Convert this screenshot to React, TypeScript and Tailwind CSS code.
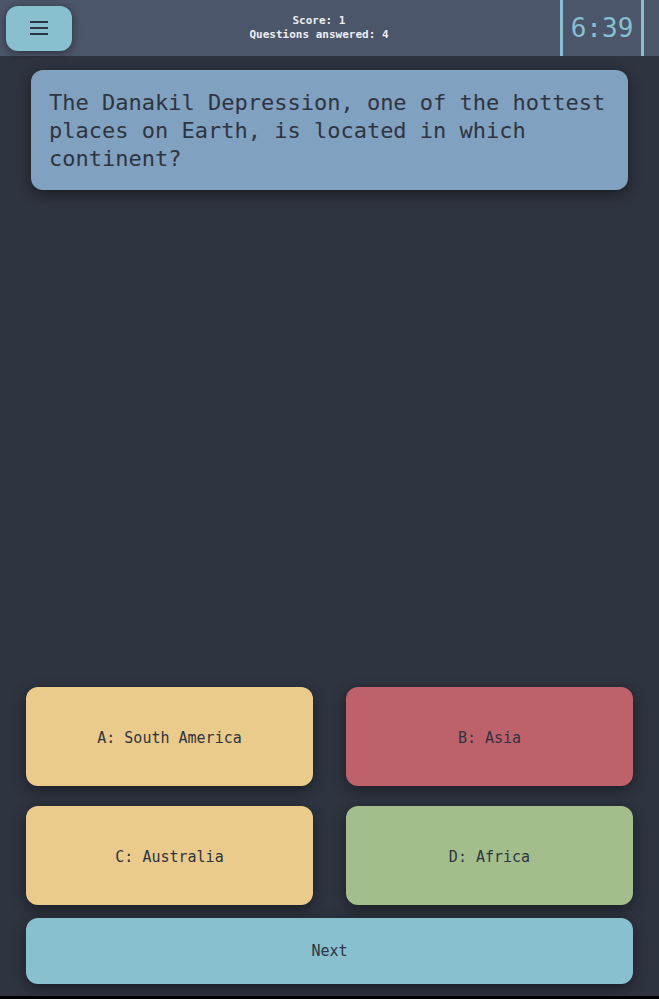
import React from 'react';

const answers = [
  { label: 'A: South America', color: 'bg-[#ebcb8b]' },
  { label: 'B: Asia', color: 'bg-[#bf616a]' },
  { label: 'C: Australia', color: 'bg-[#ebcb8b]' },
  { label: 'D: Africa', color: 'bg-[#a3be8c]' },
];

export default function App() {
  return (
    <div className="min-h-screen bg-black font-['DejaVu_Sans_Mono',monospace]">
      <div className="flex flex-col h-[996px] bg-[#2e3440]">
        {/* Top bar */}
        <header className="h-14 bg-[#4c566a] flex items-stretch shrink-0">
          <div className="flex items-center pl-[6px]">
            <button className="w-[66px] h-[45px] rounded-xl bg-[#88c0d0] shadow-[0_2px_8px_rgba(0,0,0,0.45)] flex items-center justify-center">
              <svg width="18" height="14" viewBox="0 0 18 14">
                <rect x="0" y="0" width="18" height="2" fill="#2e3440" />
                <rect x="0" y="6" width="18" height="2" fill="#2e3440" />
                <rect x="0" y="12" width="18" height="2" fill="#2e3440" />
              </svg>
            </button>
          </div>
          <div className="flex-1 flex flex-col items-center justify-center text-[11px] leading-[14px] font-bold text-[#eceff4] pl-[6px]">
            <span>Score: 1</span>
            <span>Questions answered: 4</span>
          </div>
          <div className="w-[84px] border-x-[3px] border-[#88c0d0] flex items-center justify-center text-[26px] text-[#88c0d0] mr-[15px]">
            6:39
          </div>
        </header>

        {/* Question */}
        <main className="flex-1 flex flex-col px-[26px] pb-3">
          <div className="mx-[5px] mt-[14px] rounded-xl bg-[#81a1c1] px-[18px] pt-[19px] pb-[17px] text-[22px] leading-[28px] text-[#2e3440] shadow-[0_4px_14px_rgba(0,0,0,0.45)]">
            The Danakil Depression, one of the hottest places on Earth, is located in which continent?
          </div>

          <div className="flex-1" />

          <div className="grid grid-cols-2 gap-x-[33px] gap-y-[20px]">
            {answers.map((a) => (
              <button
                key={a.label}
                className={`h-[99px] rounded-xl ${a.color} pt-[3px] text-[15px] text-[#2e3440] shadow-[0_4px_14px_rgba(0,0,0,0.45)]`}
              >
                {a.label}
              </button>
            ))}
          </div>

          <button className="mt-[13px] h-[66px] rounded-xl bg-[#88c0d0] text-[15px] text-[#2e3440] shadow-[0_4px_14px_rgba(0,0,0,0.45)]">
            Next
          </button>
        </main>
      </div>
    </div>
  );
}
